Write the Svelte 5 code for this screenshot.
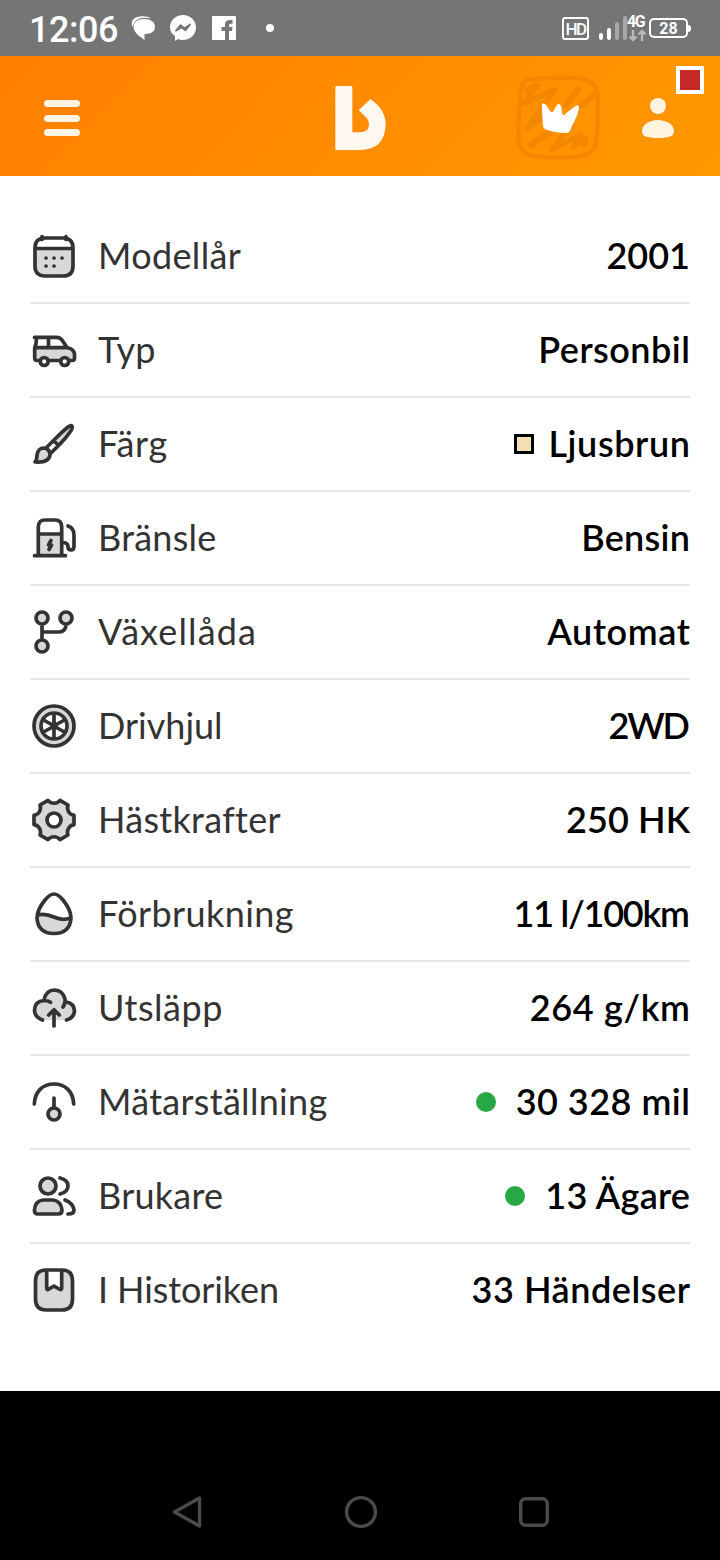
<script lang="ts">
  type Row = {
    label: string;
    value: string;
    shade: string;
    line: string;
    mark?: "swatch" | "dot";
    labelTrack?: number;
    valueTrack?: number;
  };

  const rows: Row[] = [
    {
      label: "Modellår",
      value: "2001",
      labelTrack: 0.35,
      shade: "M5 17H43V34Q43 44 33 44H15Q5 44 5 34Z",
      line: "M15 6H33Q43 6 43 16V34Q43 44 33 44H15Q5 44 5 34V16Q5 6 15 6ZM5 16.5H43M12 4.500V7.500M36 4.500V7.500",
    },
    {
      label: "Typ",
      value: "Personbil",
      labelTrack: 0.3,
      valueTrack: 0.5,
      shade: "M5 22H37Q44 23 44.5 27V34H5Z",
      line: "M4.5 11.3H26Q30 11.3 32 14L37 21.5Q44 23 44.5 28V32Q44.5 34.5 42 34.5H40M6.5 12Q6.5 18 4.7 22V32Q4.7 34.5 7 34.5H9M19 34.5H30M5 21.7H37M18.5 12V21M18.2 35.5a4 4 0 1 1-8 0a4 4 0 1 1 8 0ZM38.7 35.5a4 4 0 1 1-8 0a4 4 0 1 1 8 0Z",
    },
    {
      label: "Färg",
      value: "Ljusbrun",
      mark: "swatch",
      labelTrack: 0.7,
      valueTrack: 0.6,
      shade: "M5 42Q7 40 7 35Q8 28 14 28Q20 29 20 35Q19 43 5 42ZM24 22L38 7Q41 5 42 6Q43 8 41 11L28 26Z",
      line: "M5 42Q7 40 7 35Q8 28 14 28Q20 29 20 35Q19 43 5 42ZM16 28L24 20Q33 11 38 7Q41 5 42 6Q43 8 40 12Q36 18 30 24L21 33M24 21L28 25",
    },
    {
      label: "Bränsle",
      value: "Bensin",
      labelTrack: 0.25,
      valueTrack: 0.3,
      shade: "M8.3 20H31.7V41H8.3Z",
      line: "M8.3 41V13Q8.3 6 15 6H25Q31.7 6 31.7 13V41M8.3 20H31.7M4.5 41.7H35.5M21 26.5L18.500 31H21.500L19 35.5M38 12Q44 14 44 21V32Q44 36 41 36Q38 36 38 32.5Q38 28.5 32 28.5",
    },
    {
      label: "Växellåda",
      value: "Automat",
      labelTrack: 1.1,
      valueTrack: 0.65,
      shade: "M18 10a6 6 0 1 1-12 0a6 6 0 1 1 12 0ZM42 10a6 6 0 1 1-12 0a6 6 0 1 1 12 0ZM18 38a6 6 0 1 1-12 0a6 6 0 1 1 12 0Z",
      line: "M18 10a6 6 0 1 1-12 0a6 6 0 1 1 12 0ZM42 10a6 6 0 1 1-12 0a6 6 0 1 1 12 0ZM18 38a6 6 0 1 1-12 0a6 6 0 1 1 12 0ZM12 16V32M12 24H29Q36 24 36 16",
    },
    {
      label: "Drivhjul",
      value: "2WD",
      valueTrack: -2.2,
      shade: "M44 24a20 20 0 1 1-40 0a20 20 0 1 1 40 0ZM37 24a13 13 0 1 0-26 0a13 13 0 1 0 26 0Z",
      line: "M44 24a20 20 0 1 1-40 0a20 20 0 1 1 40 0ZM37 24a13 13 0 1 0-26 0a13 13 0 1 0 26 0ZM26 24a2 2 0 1 0-4 0a2 2 0 1 0 4 0ZM24 11V22M24 26V37M12.7 17.5L22.5 23M25.5 25L35.3 30.5M12.7 30.5L22.5 25M25.5 23L35.3 17.5",
    },
    {
      label: "Hästkrafter",
      value: "250 HK",
      labelTrack: 0.3,
      valueTrack: 0.1,
      shade: "M44 19.4V28.6C39 29.5 36.3 34.3 38 39L30 43.6C26.8 39.8 21.2 39.8 18 43.6L10 39C11.7 34.3 9 29.5 4 28.6V19.4C9 18.5 11.7 13.7 10 9L18 4.4C21.2 8.2 26.8 8.2 30 4.4L38 9C36.3 13.7 39 18.5 44 19.4ZM31 24a7 7 0 1 0-14 0a7 7 0 1 0 14 0Z",
      line: "M44 19.4V28.6C39 29.5 36.3 34.3 38 39L30 43.6C26.8 39.8 21.2 39.8 18 43.6L10 39C11.7 34.3 9 29.5 4 28.6V19.4C9 18.5 11.7 13.7 10 9L18 4.4C21.2 8.2 26.8 8.2 30 4.4L38 9C36.3 13.7 39 18.5 44 19.4ZM31 24a7 7 0 1 0-14 0a7 7 0 1 0 14 0Z",
    },
    {
      label: "Förbrukning",
      value: "11 l/100km",
      labelTrack: 0.4,
      valueTrack: -1.2,
      shade: "M7 25Q15 23 24 27Q32 31 41 28Q39 43.5 24 43.5Q9 43 7 25Z",
      line: "M24 4Q28 4 33 10Q41 20 41 28Q40 43.5 24 43.5Q8 43.5 7 28Q7 20 15 10Q20 4 24 4ZM7.5 25Q15 23 24 27Q32 31 40.5 28",
    },
    {
      label: "Utsläpp",
      value: "264 g/km",
      labelTrack: 0.5,
      valueTrack: 0.65,
      shade: "M12.5 36Q4.5 33 4.5 26Q5 17 14 16Q16 6 24 6Q33 6 35 17Q44 18 44.5 27Q44 34 36 36Z",
      line: "M12.5 36Q4.5 33 4.5 26Q5 17 14 16.5Q18 16.5 20.5 18.3M14 16Q16 6 24.5 6Q33 6.5 35 15Q35.5 20 33 23M36 18Q44 19 44.5 27Q44 34 36.5 36M24 42V26M18.7 31L24 25.7L29.3 31",
    },
    {
      label: "Mätarställning",
      value: "30 328 mil",
      mark: "dot",
      labelTrack: 0.3,
      valueTrack: 0.5,
      shade: "M30 36a6 6 0 1 1-12 0a6 6 0 1 1 12 0Z",
      line: "M4.3 26C5 13 13 6 24 6S43 13 43.7 26M24 20V30M30 36a6 6 0 1 1-12 0a6 6 0 1 1 12 0Z",
    },
    {
      label: "Brukare",
      value: "13 Ägare",
      mark: "dot",
      labelTrack: 0.25,
      valueTrack: 0.25,
      shade: "M26 14a8 8 0 1 1-16 0a8 8 0 1 1 16 0ZM13 28H23Q31 29 32 38Q32 42 28 42H8Q4 42 4.5 38Q5 29 13 28Z",
      line: "M26 14a8 8 0 1 1-16 0a8 8 0 1 1 16 0ZM13 28H23Q31 29 32 38Q32 42 28 42H8Q4 42 4.5 38Q5 29 13 28ZM30 6Q38 8 38 14Q38 20 30 22M35 28Q43 31 44 38Q44 42 38 42",
    },
    {
      label: "I Historiken",
      value: "33 Händelser",
      labelTrack: -0.1,
      valueTrack: 0.55,
      shade: "M15 4H16.7V24L24 20L31.7 24V4H33Q43 5 43 15V33Q43 44 33 44H15Q5 44 5 33V15Q5 4 15 4Z",
      line: "M16 4H32Q42.500 4 42.500 15V33Q42.500 44 32 44H16Q5.500 44 5.500 33V15Q5.500 4 16 4ZM16.7 5V22Q16.7 24.5 19 23L24 20L29 23Q31.7 24.5 31.7 22V5",
    },
  ];
</script>

<div class="screen">
  <div class="status">
    <span class="time">12:06</span>
    <svg class="chat" width="24" height="24" viewBox="0 0 24 24" fill="#fff">
      <path d="M1.500 11C-1 5 3 1 9 .500C14 0 18 1 19.500 2.500C10 .500 3.500 3 1.500 11Z" />
      <path d="M13 3C20 3 24 6 24 11C24 15.500 20 18 13.500 18V24C8 20 2.500 16 2.500 11C2.500 6 7 3 13 3Z" />
    </svg>
    <svg class="messenger" width="26" height="26" viewBox="0 0 26 26">
      <path d="M13 0C20 0 26 5 26 12.5S20 25 13 25Q10 25 8 24L5 26V21Q0 18 0 12.5C0 5 6 0 13 0Z" fill="#fff" />
      <path d="M5.500 16L10.5 10L14.5 13L20.5 9L15.5 15.5L11.5 12.5Z" fill="#757575" stroke="#757575" stroke-width="1.500" />
    </svg>
    <svg class="facebook" width="24" height="24" viewBox="0 0 24 24">
      <rect width="24" height="24" rx="1" fill="#fff" />
      <path d="M13 24V15H9.5V11H13V8.5Q13 4 18 4H20.5V7.7H18.5Q17 7.7 17 9.3V11H20.5L20 15H17V24Z" fill="#757575" />
    </svg>
    <i class="more"></i>
    <span class="hd">HD</span>
    <svg class="signal" width="30" height="28" viewBox="0 0 30 28" stroke-width="4" stroke-linecap="round">
      <path d="M3 21V24M11 16V24" stroke="#fff" />
      <path d="M19 10V24M27 4V24" stroke="#a8a8a8" />
    </svg>
    <div class="network">
      <span>4G</span>
      <svg width="18" height="13" viewBox="0 0 18 13" fill="none" stroke="#b8b8b8" stroke-width="2.400">
        <path d="M5 1V11M1.5 7.5L5 11L8.5 7.5M14 12V2M10.5 5.5L14 2L17.5 5.5" />
      </svg>
    </div>
    <span class="battery">28</span>
    <i class="battery-tip"></i>
  </div>

  <header>
    <button class="menu" aria-label="Meny"><i></i><i></i><i></i></button>
    <svg class="logo" width="51" height="64" viewBox="77 48 151 192" fill="#fff8f0">
      <path d="M77 51Q77 48 80 48H124Q128 48 128 52V187H152Q178 186 178 162Q178 150 169 142L147 121L182 87Q228 119 228 163Q226 240 150 240H80Q77 240 77 237Z" />
    </svg>
    <button class="premium" aria-label="Premium">
      <svg width="86" height="88" viewBox="46 222 258 264" fill="none" stroke-linecap="round" stroke-linejoin="round">
        <g stroke="#f38700">
          <path stroke-width="13" d="M78 240Q160 228 235 235Q282 238 293 275Q298 350 289 430Q282 462 240 469Q160 478 92 466Q60 455 56 418Q55 340 64 265Q68 244 88 240" />
          <path stroke-width="17" d="M82 272L112 256L72 312L166 268L82 384L130 350M236 268L200 314M284 284L94 436L150 398M214 374L158 448L244 404L222 440L258 414L254 434" />
        </g>
        <path fill="#fff" d="M126 316Q129 304 139 314L152 334Q157 341 162 332L171 316Q178 307 184 318L188 342Q191 351 199 340L227 318Q239 312 238 325Q235 345 223 366Q215 382 211 393Q207 400 199 399Q165 398 139 389Q131 386 130 378Q128 346 126 316Z" />
      </svg>
    </button>
    <button class="account" aria-label="Konto">
      <svg width="32" height="41" viewBox="0 0 32 41" fill="#fff3e2">
        <circle cx="16" cy="8" r="8" />
        <path d="M16 22C25 22 32 27 32 33C32 38 28 40 16 40S0 38 0 33C0 27 7 22 16 22Z" />
      </svg>
      <i class="badge"></i>
    </button>
  </header>

  <main>
    {#each rows as row, i}
      <div class="row">
        <svg
          class="icon"
          viewBox="0 0 48 48"
          fill="none"
          stroke-width="3.7"
          stroke-linecap="round"
          stroke-linejoin="round"
        >
          <path d={row.shade} fill="#d8d8d8" fill-rule="evenodd" />
          <path d={row.line} stroke="#333" />
          {#if i === 0}
            <path d="M16 26h.01M24 26h.01M32 26h.01M16 34h.01M24 34h.01" stroke="#333" />
          {/if}
        </svg>
        <span class="label" style:--track="{row.labelTrack ?? 0}px">{row.label}</span>
        {#if row.mark}
          <i class={row.mark}></i>
        {/if}
        <span class="value" style:--track="{row.valueTrack ?? 0}px">{row.value}</span>
      </div>
    {/each}
  </main>

  <nav>
    <svg width="30" height="34" viewBox="0 0 30 34">
      <path d="M2.500 17L27.500 3V31Z" />
    </svg>
    <svg width="32" height="34" viewBox="0 0 32 34">
      <circle cx="16" cy="17" r="14.4" />
    </svg>
    <svg width="30" height="34" viewBox="0 0 30 34">
      <rect x="1.7" y="3.7" width="26.6" height="26.6" rx="5" />
    </svg>
  </nav>
</div>

<style>
  :global(body) {
    margin: 0;
  }

  .screen {
    width: 720px;
    height: 1560px;
    display: flex;
    flex-direction: column;
    background: #fff;
    font-family: Lato, sans-serif;
    overflow: hidden;
  }

  .screen * {
    box-sizing: border-box;
  }

  svg,
  i {
    display: block;
    flex: none;
  }

  button {
    border: none;
    padding: 0;
    background: none;
  }

  .status {
    height: 56px;
    flex: none;
    display: flex;
    align-items: center;
    background: #757575;
    color: #fff;
    font-family: Roboto, sans-serif;
  }

  .time {
    width: 102px;
    padding-top: 3px;
    margin-left: 29px;
    font-size: 36px;
    font-weight: 500;
    line-height: 42px;
    letter-spacing: -0.5px;
  }

  .messenger {
    margin-left: 15px;
  }

  .facebook {
    margin-left: 15.5px;
  }

  .more {
    width: 8px;
    height: 8px;
    margin-left: 30px;
    border-radius: 50%;
    background: #fff;
  }

  .hd {
    width: 27px;
    height: 23px;
    margin-left: auto;
    border: 2px solid #fff;
    border-radius: 3px;
    font-size: 17px;
    font-weight: 500;
    line-height: 20px;
    text-align: center;
    letter-spacing: -1.5px;
  }

  .signal {
    margin-left: 9px;
  }

  .network {
    width: 20px;
    margin-left: 1px;
    display: flex;
    flex-direction: column;
  }

  .network span {
    margin-left: -2px;
    font-size: 16px;
    font-weight: 700;
    line-height: 14px;
    letter-spacing: -1.5px;
  }

  .network svg {
    margin-left: -1px;
  }

  .battery {
    width: 39px;
    height: 20px;
    border: 2px solid #fff;
    border-radius: 5px;
    font-size: 16px;
    font-weight: 700;
    line-height: 17px;
    text-align: center;
  }

  .battery-tip {
    width: 3px;
    height: 7px;
    margin-right: 29px;
    border-radius: 0 3px 3px 0;
    background: #fff;
  }

  header {
    height: 120px;
    flex: none;
    display: flex;
    align-items: center;
    padding: 4px 46px 0 44px;
    background: linear-gradient(135deg, #ff7f00, #ff9900);
  }

  .menu {
    width: 36px;
    display: flex;
    flex-direction: column;
    gap: 7.5px;
  }

  .menu i {
    height: 7px;
    border-radius: 4px;
    background: #fff3e2;
  }

  .logo {
    margin-left: 255px;
  }

  .premium {
    margin-left: 129px;
  }

  .account {
    position: relative;
    margin-left: auto;
  }

  .badge {
    position: absolute;
    top: -32px;
    right: -30px;
    width: 28px;
    height: 28px;
    border: 4px solid #fff;
    background: #c62828;
  }

  main {
    height: 1215px;
    flex: none;
    padding: 34px 30px 0;
  }

  .row {
    height: 94px;
    display: flex;
    align-items: center;
    border-bottom: 2px solid #e5e5e5;
    font-size: 36px;
    line-height: 48px;
    white-space: nowrap;
  }

  .row:last-child {
    border-bottom-color: transparent;
  }

  .icon {
    width: 48px;
    height: 48px;
  }

  .label,
  .value {
    padding-bottom: 2px;
    letter-spacing: var(--track);
  }

  .label {
    margin-left: 20px;
    margin-right: auto;
    color: #333;
  }

  /* drops the spacing after the last letter so values end on the right edge */
  .value {
    margin-right: calc(-1 * var(--track));
    color: #000;
    font-weight: 600;
  }

  .swatch {
    width: 20px;
    height: 20px;
    margin-right: 14px;
    border: 3px solid #000;
    background: #f5deb3;
  }

  .dot {
    width: 20px;
    height: 20px;
    margin-right: 20px;
    border-radius: 50%;
    background: #28a745;
  }

  nav {
    flex: 1;
    display: flex;
    align-items: flex-end;
    justify-content: space-between;
    padding: 0 171px 31px 172px;
    background: #000;
  }

  nav svg {
    fill: none;
    stroke: #4a4a4a;
    stroke-width: 3.4;
    stroke-linejoin: round;
  }
</style>
